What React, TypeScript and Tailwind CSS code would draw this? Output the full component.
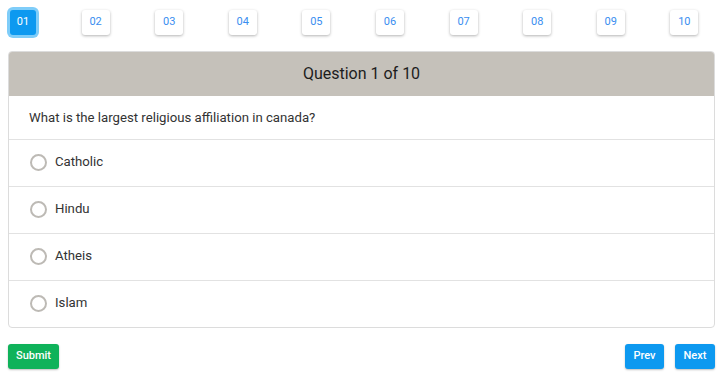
import { useState } from "react";

const pages = ["01", "02", "03", "04", "05", "06", "07", "08", "09", "10"];
const options = ["Catholic", "Hindu", "Atheis", "Islam"];

export default function App() {
  const [current, setCurrent] = useState(0);
  const [picked, setPicked] = useState<string | null>(null);

  return (
    <div className="min-h-screen bg-white px-2 pt-[10px] font-['Roboto',sans-serif] text-[#333]">
      {/* question number pager */}
      <div className="flex gap-[45.6px] pl-[2px]">
        {pages.map((p, i) => (
          <button
            key={p}
            onClick={() => setCurrent(i)}
            className={
              i === current
                ? "h-[25px] w-[26px] shrink-0 rounded-[3px] bg-[#0d99f0] text-[11px] text-white ring-[3px] ring-[#7fcdf9]"
                : "h-[25px] w-[28px] shrink-0 rounded-[3px] bg-white text-[11px] text-[#3a8ef0] shadow-[0_1px_3px_rgba(0,0,0,0.3)]"
            }
          >
            {p}
          </button>
        ))}
      </div>

      {/* question card */}
      <div className="mt-[16px] overflow-hidden rounded-[4px] border border-[#dcdcdc]">
        <div className="flex h-[44px] items-center justify-center bg-[#c5c1ba] text-[16px] text-[#1d1d1d]">
          Question {current + 1} of 10
        </div>
        <div className="flex h-[44px] items-center border-b border-[#e2e2e2] px-[20px] text-[13.2px] text-[#333]">
          What is the largest religious affiliation in canada?
        </div>
        {options.map((o, i) => (
          <label
            key={o}
            className={
              "flex cursor-pointer items-center gap-[8px] px-[21px] pb-[2px] text-[13.2px] text-[#333]" +
              (i < options.length - 1 ? " h-[47px] border-b border-[#e2e2e2]" : " h-[46px]")
            }
            onClick={() => setPicked(o)}
          >
            <span className="flex h-[17px] w-[17px] items-center justify-center rounded-full border-2 border-[#bdbab5]">
              {picked === o && <span className="h-[7px] w-[7px] rounded-full bg-[#0d99f0]" />}
            </span>
            {o}
          </label>
        ))}
      </div>

      {/* actions */}
      <div className="mt-[16px] flex items-center">
        <button className="h-[25px] rounded-[3px] bg-[#0fb25a] px-[8px] text-[11px] font-medium text-white shadow-[0_1px_2px_rgba(0,0,0,0.25)]">
          Submit
        </button>
        <div className="ml-auto flex gap-[11px]">
          <button
            onClick={() => setCurrent((c) => Math.max(0, c - 1))}
            className="h-[25px] w-[39px] rounded-[3px] bg-[#0d99f0] text-[11px] font-medium text-white shadow-[0_1px_2px_rgba(0,0,0,0.25)]"
          >
            Prev
          </button>
          <button
            onClick={() => setCurrent((c) => Math.min(9, c + 1))}
            className="h-[25px] w-[40px] rounded-[3px] bg-[#0d99f0] text-[11px] font-medium text-white shadow-[0_1px_2px_rgba(0,0,0,0.25)]"
          >
            Next
          </button>
        </div>
      </div>
    </div>
  );
}
